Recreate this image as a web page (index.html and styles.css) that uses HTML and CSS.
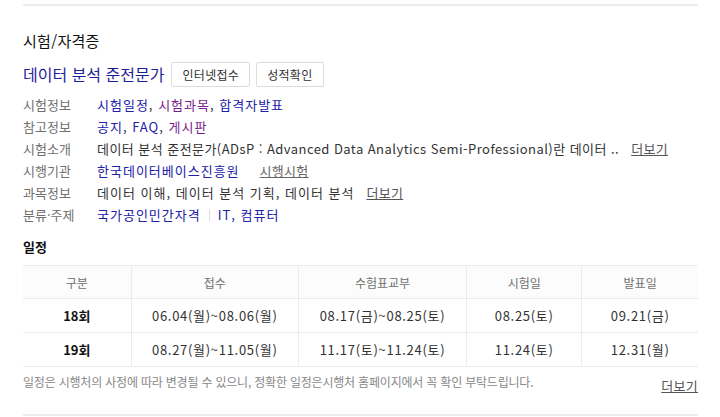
FILE: index.html
```html
<!DOCTYPE html>
<html lang="ko">
<head>
    <meta charset="UTF-8">
    <meta name="viewport" content="width=device-width, initial-scale=1.0">
    <title>시험/자격증</title>
    <link rel="stylesheet" href="styles.css">
</head>
<body>
    <div class="exam-box">
        <h2 class="box-title">시험/자격증</h2>

        <div class="exam-name">
            <a href="#" class="name-link">데이터 분석 준전문가</a>
            <a href="#" class="btn">인터넷접수</a>
            <a href="#" class="btn">성적확인</a>
        </div>

        <dl class="info-list">
            <div class="info-row">
                <dt>시험정보</dt>
                <dd><a href="#">시험일정</a>, <a href="#" class="visited">시험과목</a>, <a href="#">합격자발표</a></dd>
            </div>
            <div class="info-row">
                <dt>참고정보</dt>
                <dd><a href="#">공지</a>, <a href="#">FAQ</a>, <a href="#" class="visited">게시판</a></dd>
            </div>
            <div class="info-row">
                <dt>시험소개</dt>
                <dd><span class="desc">데이터 분석 준전문가(ADsP : Advanced Data Analytics Semi-Professional)란 데이터 ..</span><a href="#" class="more">더보기</a></dd>
            </div>
            <div class="info-row">
                <dt>시행기관</dt>
                <dd><a href="#">한국데이터베이스진흥원</a><a href="#" class="more sub">시행시험</a></dd>
            </div>
            <div class="info-row">
                <dt>과목정보</dt>
                <dd>데이터 이해, 데이터 분석 기획, 데이터 분석<a href="#" class="more">더보기</a></dd>
            </div>
            <div class="info-row">
                <dt>분류·주제</dt>
                <dd><a href="#">국가공인민간자격</a><span class="bar"></span><a href="#">IT, 컴퓨터</a></dd>
            </div>
        </dl>

        <h3 class="sub-title">일정</h3>

        <table class="schedule">
            <colgroup>
                <col style="width: 108px">
                <col style="width: 167px">
                <col style="width: 168px">
                <col style="width: 115px">
                <col style="width: 116px">
            </colgroup>
            <thead>
                <tr>
                    <th>구분</th>
                    <th>접수</th>
                    <th>수험표교부</th>
                    <th>시험일</th>
                    <th>발표일</th>
                </tr>
            </thead>
            <tbody>
                <tr>
                    <th>18회</th>
                    <td>06.04(월)~08.06(월)</td>
                    <td>08.17(금)~08.25(토)</td>
                    <td>08.25(토)</td>
                    <td>09.21(금)</td>
                </tr>
                <tr>
                    <th>19회</th>
                    <td>08.27(월)~11.05(월)</td>
                    <td>11.17(토)~11.24(토)</td>
                    <td>11.24(토)</td>
                    <td>12.31(월)</td>
                </tr>
            </tbody>
        </table>

        <div class="note">
            <p>일정은 시행처의 사정에 따라 변경될 수 있으니, 정확한 일정은시행처 홈페이지에서 꼭 확인 부탁드립니다.</p>
            <a href="#" class="more">더보기</a>
        </div>
    </div>
</body>
</html>
```

FILE: styles.css
```css
body {
    margin: 0;
    font-family: "Noto Sans CJK KR", "Noto Sans", sans-serif;
    color: #333;
    background-color: #fff;
}
a {
    text-decoration: none;
    color: #2020a8;
}
.exam-box {
    width: 675px;
    margin: 4px 0 0 23px;
    border-top: 2px solid #ececec;
    border-bottom: 2px solid #ececec;
    padding-bottom: 2px;
}
.box-title {
    margin: 25px 0 0;
    font-size: 15px;
    line-height: 20px;
    font-weight: normal;
    color: #111;
    letter-spacing: 0.3px;
}
.exam-name {
    display: flex;
    align-items: center;
    gap: 6px;
    margin-top: 11px;
}
.name-link {
    font-size: 16px;
    line-height: 25px;
    margin-right: 1px;
    color: #1e1e9c;
}
.btn {
    display: inline-block;
    height: 23px;
    line-height: 23px;
    padding: 0 10px;
    border: 1px solid #dcdcdc;
    border-radius: 2px;
    font-size: 12px;
    color: #333;
    letter-spacing: 0.3px;
}
.info-list {
    margin: 7px 0 0;
}
.info-row {
    display: flex;
    font-size: 13px;
    line-height: 22px;
}
.info-row dt {
    width: 74px;
    color: #707070;
}
.info-row dd {
    margin: 0;
    white-space: nowrap;
    letter-spacing: 1px;
}
.info-row a.visited {
    color: #7b1c8e;
}
.more {
    margin-left: 12px;
    color: #555;
    text-decoration: underline;
    letter-spacing: 0.3px;
}
.more.sub {
    margin-left: 20px;
    color: #666;
}
.desc {
    letter-spacing: 0.45px;
}
.bar {
    display: inline-block;
    width: 1px;
    height: 12px;
    margin: 0 8px;
    vertical-align: -1px;
    background-color: #ddd;
}
.sub-title {
    margin: 12px 0 0;
    font-size: 13px;
    line-height: 18px;
    color: #111;
}
.schedule {
    width: 675px;
    margin-top: 9px;
    border-collapse: collapse;
    table-layout: fixed;
    font-size: 13px;
    text-align: center;
}
.schedule th,
.schedule td {
    height: 33px;
    padding: 0;
    border-top: 1px solid #ebebeb;
    border-bottom: 1px solid #ebebeb;
    border-left: 1px solid #ebebeb;
}
.schedule tr > :first-child {
    border-left: none;
}
.schedule thead th {
    height: 32px;
    font-size: 12px;
    font-weight: normal;
    color: #707070;
    background-color: #fcfcfc;
}
.schedule tbody th {
    color: #111;
}
.schedule td {
    color: #333;
    letter-spacing: 0.7px;
}
.note {
    display: flex;
    justify-content: space-between;
    align-items: flex-end;
    margin-top: 6px;
    height: 39px;
}
.note p {
    margin: 0;
    align-self: flex-start;
    font-size: 12px;
    line-height: 18px;
    color: #888;
    letter-spacing: -0.2px;
}
.note .more {
    font-size: 13px;
    line-height: 18px;
    margin-bottom: 17px;
}
```
